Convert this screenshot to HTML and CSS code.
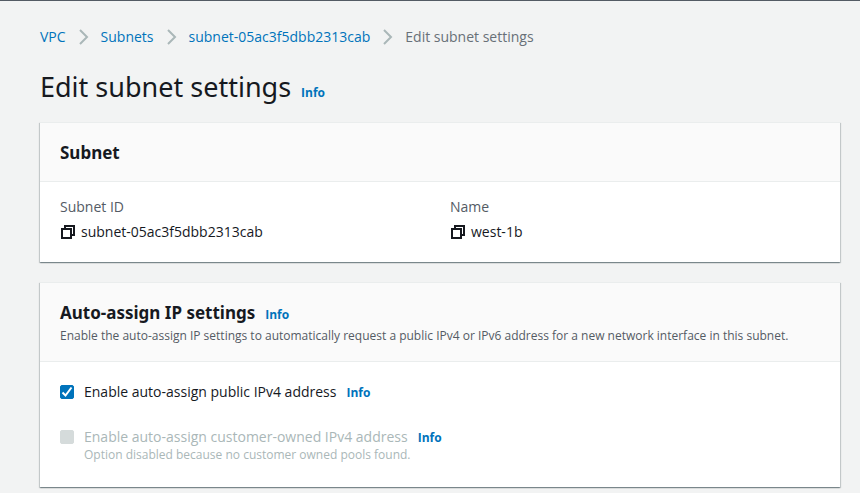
FILE: index.html
```html
<!DOCTYPE html>
<html lang="en">
<head>
<meta charset="utf-8">
<title>Edit subnet settings</title>
<link rel="stylesheet" href="styles.css">
</head>
<body>
<main class="page">
  <nav aria-label="Breadcrumbs">
    <ol class="crumbs">
      <li><a href="#vpc">VPC</a><svg class="chevron" viewBox="0 0 10 16" aria-hidden="true"><path d="M1 1l7 7-7 7"/></svg></li>
      <li><a href="#subnets">Subnets</a><svg class="chevron" viewBox="0 0 10 16" aria-hidden="true"><path d="M1 1l7 7-7 7"/></svg></li>
      <li><a href="#subnet">subnet-05ac3f5dbb2313cab</a><svg class="chevron" viewBox="0 0 10 16" aria-hidden="true"><path d="M1 1l7 7-7 7"/></svg></li>
      <li><span aria-current="page">Edit subnet settings</span></li>
    </ol>
  </nav>
  <header class="title">
    <h1>Edit subnet settings</h1>
    <a class="info" href="#info">Info</a>
  </header>

  <section class="card">
    <header class="card-header"><h2>Subnet</h2></header>
    <dl class="card-body details">
      <div>
        <dt>Subnet ID</dt>
        <dd><button class="copy" type="button" aria-label="Copy subnet ID"><svg viewBox="0 0 14 14" aria-hidden="true"><path d="M1 4h9v9H1zM4 4V1h9v9h-3"/></svg></button>subnet-05ac3f5dbb2313cab</dd>
      </div>
      <div>
        <dt>Name</dt>
        <dd><button class="copy" type="button" aria-label="Copy name"><svg viewBox="0 0 14 14" aria-hidden="true"><path d="M1 4h9v9H1zM4 4V1h9v9h-3"/></svg></button>west-1b</dd>
      </div>
    </dl>
  </section>

  <section class="card">
    <header class="card-header">
      <div class="heading"><h2>Auto-assign IP settings</h2><a class="info" href="#info-ip">Info</a></div>
      <p class="description">Enable the auto-assign IP settings to automatically request a public IPv4 or IPv6 address for a new network interface in this subnet.</p>
    </header>
    <div class="card-body options">
      <div class="option">
        <input type="checkbox" id="public-ip" checked>
        <div class="option-line"><label for="public-ip">Enable auto-assign public IPv4 address</label><a class="info" href="#info-public">Info</a></div>
      </div>
      <div class="option disabled">
        <input type="checkbox" id="customer-ip" aria-describedby="customer-note" disabled>
        <div class="option-line"><label for="customer-ip">Enable auto-assign customer-owned IPv4 address</label><a class="info" href="#info-customer">Info</a></div>
        <p class="note" id="customer-note">Option disabled because no customer owned pools found.</p>
      </div>
    </div>
  </section>
</main>
</body>
</html>
```
FILE: styles.css
```css
* { box-sizing: border-box; }

body {
  margin: 0;
  border-top: 1px solid #545b64;
  background: #f2f3f3;
  color: #16191f;
  font: 14px/20px "Open Sans", "Noto Sans", sans-serif;
}

h1, h2, p, dl, dd, ol { margin: 0; padding: 0; }

a { color: #0073bb; text-decoration: none; }

.page { padding: 26px 20px 4px 40px; }

.crumbs {
  display: flex;
  list-style: none;
  color: #687078;
}

.crumbs li { display: flex; align-items: center; }

.chevron {
  width: 10px;
  height: 16px;
  margin: 0 12px 0 13px;
  fill: none;
  stroke: #aab7b8;
  stroke-width: 2;
}

.title {
  display: flex;
  align-items: baseline;
  gap: 10px;
  margin: 22px 0 17px;
}

h1, h2 { font-family: "Noto Sans", "Open Sans", sans-serif; }

h1 { font-size: 27px; line-height: 36px; font-weight: 400; }

h2 { font-size: 17px; line-height: 22px; font-weight: 700; }

.info { font-size: 12px; line-height: 16px; font-weight: 700; }

.card {
  border-top: 1px solid #eaeded;
  background: #fff;
  box-shadow: 0 1px 1px 0 rgba(0, 28, 36, 0.3),
    1px 1px 1px 0 rgba(0, 28, 36, 0.15),
    -1px 1px 1px 0 rgba(0, 28, 36, 0.15);
}

.card + .card { margin-top: 20px; }

.card-header {
  padding: 19px 20px 17px;
  border-bottom: 1px solid #eaeded;
  background: #fafafa;
}

.heading { display: flex; align-items: baseline; gap: 10px; }

.description { margin-top: 4px; color: #545b64; font-size: 12px; line-height: 16px; }

.card-body { padding: 15px 20px 20px; }

.details { display: grid; grid-template-columns: 1fr 1fr; gap: 20px; }

.details dt { margin-bottom: 5px; color: #545b64; }

.details dd { display: flex; align-items: center; }

.copy {
  display: flex;
  margin: 0 6px 0 1px;
  padding: 0;
  border: 0;
  background: none;
}

.copy svg {
  width: 14px;
  height: 14px;
  fill: none;
  stroke: #16191f;
  stroke-width: 2;
}

.options { padding-bottom: 24px; padding-top: 20px; }

.option {
  display: grid;
  grid-template-columns: 14px 1fr;
  column-gap: 10px;
  align-items: center;
}

.option + .option { margin-top: 25px; }

.option-line { display: flex; align-items: baseline; gap: 10px; }

.option input {
  appearance: none;
  width: 14px;
  height: 14px;
  margin: 0;
  border: 1px solid #687078;
  border-radius: 2px;
}

.option input:checked {
  border-color: #0073bb;
  background: #0073bb url("data:image/svg+xml,%3Csvg xmlns='http://www.w3.org/2000/svg' viewBox='0 0 12 12'%3E%3Cpath d='M1.5 6.5l3 3 6-8' fill='none' stroke='white' stroke-width='2'/%3E%3C/svg%3E") center / 12px 12px no-repeat;
}

.option input:disabled { border-color: #d5dbdb; background: #d5dbdb; }

.disabled label, .note { color: #aab7b8; }

.note { grid-column: 2; font-size: 12px; line-height: 16px; }
```
